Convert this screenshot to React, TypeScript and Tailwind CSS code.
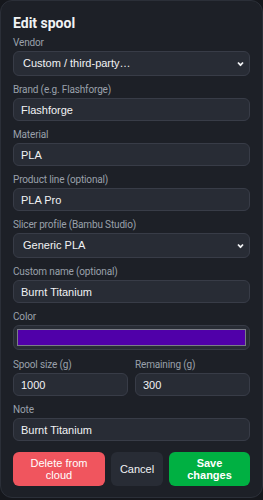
import { useState } from 'react';

const labelCls = "block text-[10px] leading-[14px] tracking-[-0.15px] text-[#9aa0ab] font-['Roboto',sans-serif]";
const inputCls =
  "mt-px block w-full h-[23px] rounded-md border border-[#383c47] bg-[#282c35] px-[7px] text-[11px] text-[#f1f2f4] font-['Liberation_Sans',Arial,sans-serif] outline-none";

function Chevron() {
  return (
    <svg
      className="pointer-events-none absolute right-[6px] top-1/2 -translate-y-1/2"
      width="7"
      height="5"
      viewBox="0 0 7 5"
    >
      <path d="M1 1 L3.5 3.6 L6 1" fill="none" stroke="#f1f2f4" strokeWidth="1.8" />
    </svg>
  );
}

function SelectField({ label, value, options }: { label: string; value: string; options: string[] }) {
  const [v, setV] = useState(value);
  return (
    <div>
      <label className={labelCls}>{label}</label>
      <div className="relative mt-px">
        <select
          value={v}
          onChange={(e) => setV(e.target.value)}
          className="block w-full h-[25px] appearance-none rounded-md border border-[#383c47] bg-[#282c35] pl-[9px] pr-5 text-[11px] text-[#f1f2f4] font-['Liberation_Sans',Arial,sans-serif] outline-none"
        >
          {options.map((o) => (
            <option key={o}>{o}</option>
          ))}
        </select>
        <Chevron />
      </div>
    </div>
  );
}

function TextField({ label, value }: { label: string; value: string }) {
  const [v, setV] = useState(value);
  return (
    <div className="min-w-0">
      <label className={labelCls}>{label}</label>
      <input value={v} onChange={(e) => setV(e.target.value)} className={inputCls} />
    </div>
  );
}

export default function App() {
  return (
    <div className="min-h-[500px] bg-[#15171c]">
      <div className="w-[263px] rounded-xl border border-[#2b2f38] bg-[#1d2027] px-3 pt-3 pb-[11px]">
        <h2 className="text-[14px] leading-[20px] font-bold text-[#f1f2f4] font-['Roboto',sans-serif]">
          Edit spool
        </h2>
        <div className="mt-[3px] flex flex-col gap-[7px]">
          <SelectField
            label="Vendor"
            value="Custom / third-party…"
            options={['Bambu Lab', 'Custom / third-party…']}
          />
          <TextField label="Brand (e.g. Flashforge)" value="Flashforge" />
          <TextField label="Material" value="PLA" />
          <TextField label="Product line (optional)" value="PLA Pro" />
          <SelectField
            label="Slicer profile (Bambu Studio)"
            value="Generic PLA"
            options={['Generic PLA', 'Generic PETG', 'Generic ABS']}
          />
          <TextField label="Custom name (optional)" value="Burnt Titanium" />
          <div className="mb-px">
            <label className={labelCls}>Color</label>
            <div className="mt-px h-[25px] rounded-md border border-[#383c47] bg-[#282c35] p-[3px]">
              <div className="h-full w-full border border-[#7a7d86] bg-[#5000a9]" />
            </div>
          </div>
          <div className="grid grid-cols-2 gap-[7px]">
            <TextField label="Spool size (g)" value="1000" />
            <TextField label="Remaining (g)" value="300" />
          </div>
          <TextField label="Note" value="Burnt Titanium" />
          <div className="mt-1 flex gap-[6px] font-['Liberation_Sans',Arial,sans-serif] text-[11px] leading-[12px]">
            <button className="h-[34px] w-[92px] rounded-md bg-[#f0555e] px-2 text-white">
              Delete from cloud
            </button>
            <button className="h-[34px] w-[52px] rounded-md bg-[#282c35] text-[#f1f2f4]">
              Cancel
            </button>
            <button className="h-[34px] flex-1 rounded-md bg-[#00b042] px-2 font-bold text-white">
              Save changes
            </button>
          </div>
        </div>
      </div>
    </div>
  );
}
